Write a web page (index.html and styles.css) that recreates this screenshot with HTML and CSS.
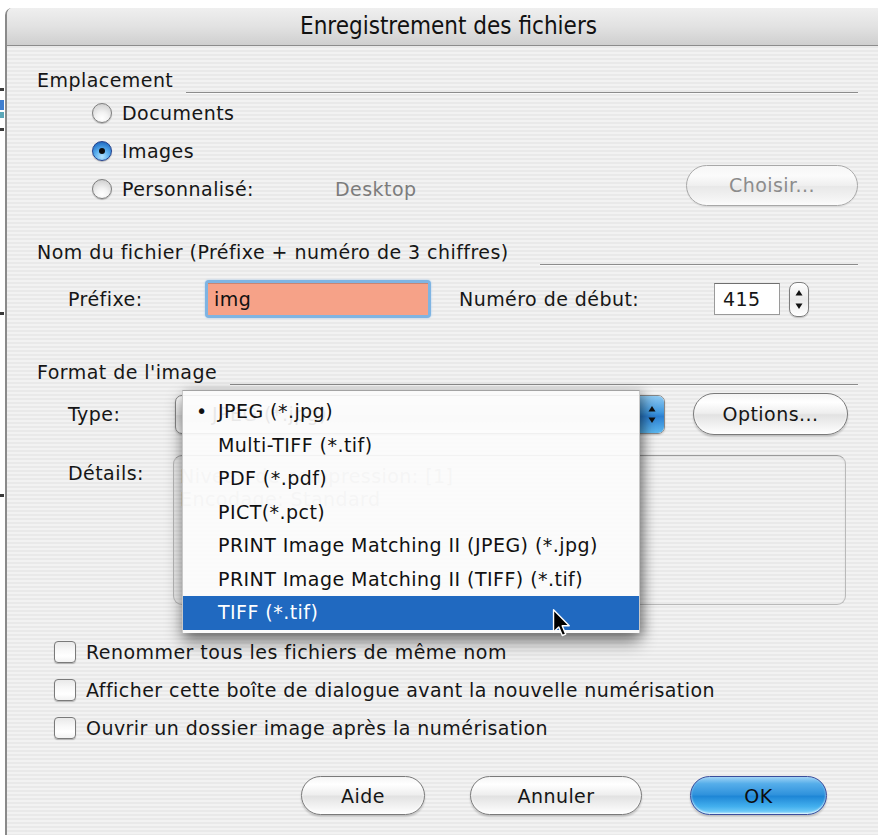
FILE: index.html
```html
<!DOCTYPE html>
<html lang="fr">
<head>
<meta charset="utf-8">
<title>Enregistrement des fichiers</title>
<link rel="stylesheet" href="styles.css">
</head>
<body>
<div class="desktop-edge">
  <span class="sliver dark" style="top:88px"></span>
  <span class="sliver blue" style="top:100px"></span>
  <span class="sliver teal" style="top:112px"></span>
  <span class="sliver dark" style="top:128px"></span>
  <span class="sliver dark" style="top:312px"></span>
  <span class="sliver dark" style="top:494px"></span>
</div>

<div class="window">
  <div class="titlebar">Enregistrement des fichiers</div>

  <div class="content">
    <!-- Emplacement -->
    <div class="group-head"><span>Emplacement</span><span class="rule"></span></div>
    <div class="radio-row first"><span class="radio"></span><span>Documents</span></div>
    <div class="radio-row"><span class="radio on"></span><span>Images</span></div>
    <div class="radio-row">
      <span class="radio"></span><span class="custom-label">Personnalisé:</span>
      <span class="path">Desktop</span>
      <button class="aqua btn-choose" disabled>Choisir...</button>
    </div>

    <!-- Nom du fichier -->
    <div class="group-head name-head"><span>Nom du fichier (Préfixe + numéro de 3 chiffres)</span><span class="rule wide-gap"></span></div>
    <div class="field-row">
      <span class="lbl-prefix">Préfixe:</span>
      <span class="prefix-ring"><span class="prefix-input">img</span></span>
      <span class="lbl-num">Numéro de début:</span>
      <span class="num-input">415</span>
      <span class="stepper">
        <svg width="20" height="35" viewBox="0 0 20 35">
          <path d="M10 8 L13.5 13.5 L6.5 13.5 Z" fill="#111"/>
          <path d="M10 27 L13.5 21.5 L6.5 21.5 Z" fill="#111"/>
        </svg>
      </span>
    </div>

    <!-- Format de l'image -->
    <div class="group-head format-head"><span>Format de l'image</span><span class="rule"></span></div>
    <div class="type-row">
      <span class="lbl-type">Type:</span>
      <span class="popup">
        <span class="popup-text">JPEG (*.jpg)</span>
        <span class="popup-arrows">
          <svg width="24" height="37" viewBox="0 0 24 37">
            <path d="M12 10 L15.5 15.5 L8.5 15.5 Z" fill="#111"/>
            <path d="M12 27 L15.5 21.5 L8.5 21.5 Z" fill="#111"/>
          </svg>
        </span>
      </span>
      <button class="aqua btn-options">Options...</button>
    </div>
    <div class="details-row">
      <span class="lbl-det">Détails:</span>
      <div class="details-box">
        <div>Niveau de compression: [1]</div>
        <div>Encodage: Standard</div>
      </div>
    </div>

    <!-- Options -->
    <div class="check-row first"><span class="check"></span><span>Renommer tous les fichiers de même nom</span></div>
    <div class="check-row"><span class="check"></span><span>Afficher cette boîte de dialogue avant la nouvelle numérisation</span></div>
    <div class="check-row"><span class="check"></span><span>Ouvrir un dossier image après la numérisation</span></div>

    <div class="button-row">
      <button class="aqua btn-help">Aide</button>
      <button class="aqua btn-cancel">Annuler</button>
      <button class="aqua default btn-ok">OK</button>
    </div>

    <!-- open popup menu -->
    <ul class="menu">
      <li class="checked">JPEG (*.jpg)</li>
      <li>Multi-TIFF (*.tif)</li>
      <li>PDF (*.pdf)</li>
      <li>PICT(*.pct)</li>
      <li>PRINT Image Matching II (JPEG) (*.jpg)</li>
      <li>PRINT Image Matching II (TIFF) (*.tif)</li>
      <li class="selected">TIFF (*.tif)</li>
    </ul>

    <svg class="cursor" width="20" height="31" viewBox="0 0 13 20">
      <path d="M1 1 L1 15.5 L4.4 12.3 L6.7 17.8 L8.9 16.9 L6.6 11.5 L11.2 11.5 Z" fill="#000" stroke="#fff" stroke-width="0.9" stroke-linejoin="round"/>
    </svg>
  </div>
</div>
</body>
</html>
```

FILE: styles.css
```css
* { box-sizing: border-box; }

html, body {
  margin: 0;
  padding: 0;
}

body {
  width: 878px;
  height: 835px;
  overflow: hidden;
  background: #ffffff;
  font-family: "DejaVu Sans", "Liberation Sans", sans-serif;
  font-size: 19px;
  letter-spacing: 0.45px;
  color: #161616;
  position: relative;
}

/* bits of the desktop peeking out on the left */
.desktop-edge {
  position: absolute;
  left: 0;
  top: 0;
  width: 5px;
  height: 835px;
}
.sliver {
  position: absolute;
  left: 0;
  width: 4px;
  height: 4px;
}
.sliver.dark { background: #3a3a3a; height: 3px; }
.sliver.blue { background: #3f7fd0; height: 10px; }
.sliver.teal { background: #5aa7b8; height: 6px; }

/* window frame */
.window {
  margin: 8px 0 0 5px;
  height: 827px;
  border-left: 2px solid #8a8a8a;
  border-top-left-radius: 7px;
  overflow: hidden;
  background: repeating-linear-gradient(180deg, #f2f2f2 0 2px, #e9e9e9 2px 4px);
}

.titlebar {
  height: 38px;
  padding-left: 12px;
  border-bottom: 1px solid #8c8c8c;
  background: linear-gradient(180deg, #efefef 0%, #e2e2e2 50%, #cfcfcf 100%);
  text-align: center;
  font-family: "DejaVu Sans Condensed", "DejaVu Sans", sans-serif;
  font-stretch: condensed;
  font-size: 24px;
  letter-spacing: 0;
  line-height: 36px;
  color: #111;
}

.content {
  position: relative;
  padding: 22px 20px 0 30px;
}

/* group headers with the rule running to the right */
.group-head {
  display: flex;
  height: 24px;
  line-height: 24px;
  white-space: nowrap;
}
.group-head.name-head { margin-top: 32px; }
.group-head.format-head { margin-top: 41px; }

.rule {
  flex: 1;
  align-self: center;
  height: 17px;
  margin-left: 13px;
  border-bottom: 1px solid #8c8c8c;
  box-shadow: 0 1px 0 #fafafa;
  transform: translateY(4px);
}
.rule.wide-gap { margin-left: 31px; }

/* radio buttons */
.radio-row {
  display: flex;
  align-items: center;
  height: 38px;
  margin-left: 55px;
  white-space: nowrap;
}
.radio-row.first { margin-top: 2px; }

.radio {
  width: 20px;
  height: 20px;
  margin-right: 10px;
  border-radius: 50%;
  border: 1px solid #7e7e7e;
  background: radial-gradient(circle at 50% 80%, #ffffff 0%, #f3f3f3 35%, #d4d4d4 80%, #bdbdbd 100%);
  box-shadow: 0 1px 1px rgba(0, 0, 0, 0.25);
  display: flex;
  align-items: center;
  justify-content: center;
  flex: none;
}
.radio.on {
  border-color: #22408c;
  background: radial-gradient(circle at 50% 82%, #b4e4ff 0%, #5cb0ee 40%, #2c7ccf 75%, #1a52a2 100%);
}
.radio.on::after {
  content: "";
  width: 6px;
  height: 6px;
  border-radius: 50%;
  background: #0c0c0c;
}

.custom-label { min-width: 213px; }
.path { color: #7c7c7c; }

/* aqua push buttons */
.aqua {
  display: flex;
  align-items: center;
  justify-content: center;
  padding: 0;
  font: inherit;
  letter-spacing: inherit;
  color: #151515;
  border: 1px solid #7a7a7a;
  border-radius: 21px;
  background: linear-gradient(180deg, #f4f4f4 0%, #ffffff 20%, #eeeeee 48%, #e2e2e2 52%, #f3f3f3 80%, #ffffff 100%);
  box-shadow: 0 2px 2px rgba(0, 0, 0, 0.18), inset 0 -1px 2px rgba(255, 255, 255, 0.9);
  flex: none;
}
.aqua:disabled {
  color: #8c8c8c;
  border-color: #a8a8a8;
  box-shadow: 0 1px 1px rgba(0, 0, 0, 0.08);
  background: linear-gradient(180deg, #f6f6f6 0%, #fbfbfb 25%, #efefef 50%, #e8e8e8 52%, #f4f4f4 85%, #fcfcfc 100%);
}
.aqua.default {
  border-color: #3a4d9c;
  color: #0d0d0d;
  background: linear-gradient(180deg, #9fd3f5 0%, #56aeea 18%, #2f92dc 48%, #1e86d6 52%, #43b0ee 80%, #7fd3fb 100%);
}

.btn-choose {
  width: 172px;
  height: 41px;
  margin-left: auto;
  margin-top: -8px;
}

/* file name row */
.field-row {
  display: flex;
  align-items: center;
  height: 40px;
  margin-top: 15px;
  padding-left: 31px;
  white-space: nowrap;
}
.lbl-prefix { width: 137px; }
.prefix-ring {
  width: 226px;
  height: 38px;
  padding: 3px;
  border-radius: 4px;
  background: #7fb4e2;
  box-shadow: 0 0 2px #9cc7ee;
  flex: none;
}
.prefix-input {
  display: block;
  height: 100%;
  padding-left: 6px;
  line-height: 30px;
  background: #f6a288;
  border-top: 1px solid #c98572;
  color: #111;
}
.lbl-num {
  width: 255px;
  margin-left: 28px;
}
.num-input {
  width: 66px;
  height: 32px;
  padding-left: 8px;
  line-height: 30px;
  background: #ffffff;
  border: 1px solid #9a9a9a;
  border-top-color: #6f6f6f;
  flex: none;
}
.stepper {
  width: 20px;
  height: 35px;
  margin-left: 9px;
  border: 1px solid #7d7d7d;
  border-radius: 8px;
  background: linear-gradient(180deg, #ffffff 0%, #e9e9e9 50%, #ffffff 100%);
  box-shadow: 0 1px 1px rgba(0, 0, 0, 0.2);
  display: flex;
  align-items: center;
  justify-content: center;
  overflow: hidden;
  flex: none;
}
.stepper svg { display: block; flex: none; }

/* image format */
.type-row {
  display: flex;
  align-items: center;
  height: 44px;
  margin-top: 8px;
  padding-left: 31px;
  white-space: nowrap;
}
.lbl-type { width: 107px; }
.popup {
  width: 490px;
  height: 39px;
  display: flex;
  align-items: center;
  border: 1px solid #868686;
  border-radius: 7px;
  background: linear-gradient(180deg, #ffffff 0%, #eeeeee 50%, #e3e3e3 52%, #fbfbfb 100%);
  box-shadow: 0 1px 2px rgba(0, 0, 0, 0.2);
  overflow: hidden;
  flex: none;
}
.popup-text {
  flex: 1;
  padding-left: 36px;
  color: #333;
}
.popup-arrows {
  width: 25px;
  height: 100%;
  background: linear-gradient(180deg, #8ec9f1 0%, #3f97de 45%, #2b7fd1 55%, #5cb7ef 100%);
  border-left: 1px solid #31539f;
  display: flex;
  align-items: center;
  justify-content: center;
}
.popup-arrows svg { display: block; }
.btn-options {
  width: 155px;
  height: 42px;
  margin-left: 28px;
}

.details-row {
  display: flex;
  margin-top: 19px;
  padding-left: 31px;
  white-space: nowrap;
}
.lbl-det {
  width: 105px;
  padding-top: 6px;
  line-height: 24px;
}
.details-box {
  width: 673px;
  height: 150px;
  padding: 9px 6px;
  border: 1px solid #b9b9b9;
  border-top-color: #9a9a9a;
  border-radius: 9px;
  line-height: 23px;
  color: #b4b4b4;
  box-shadow: inset 0 1px 2px rgba(0, 0, 0, 0.08);
}

/* check boxes */
.check-row {
  display: flex;
  align-items: center;
  height: 38px;
  margin-left: 17px;
  white-space: nowrap;
}
.check-row.first { margin-top: 28px; }
.check {
  width: 22px;
  height: 22px;
  margin-right: 10px;
  border: 1px solid #7a7a7a;
  border-radius: 4px;
  background: linear-gradient(180deg, #e9e9e9 0%, #f8f8f8 40%, #ffffff 70%, #f2f2f2 100%);
  box-shadow: 0 1px 1px rgba(0, 0, 0, 0.25);
  flex: none;
}

/* dialog buttons */
.button-row {
  display: flex;
  justify-content: flex-end;
  margin-top: 29px;
  padding-right: 31px;
}
.btn-help { width: 124px; height: 39px; }
.btn-cancel { width: 172px; height: 39px; margin-left: 45px; }
.btn-ok { width: 137px; height: 39px; margin-left: 48px; }

/* popup menu, drawn over the form */
.menu {
  position: absolute;
  left: 175px;
  top: 344px;
  width: 458px;
  height: 243px;
  margin: 0;
  padding: 4px 0 0 0;
  list-style: none;
  background: rgba(252, 252, 252, 0.9);
  border-top: 1px solid #a3a3a3;
  border-left: 1px solid #c8c8c8;
  border-right: 1px solid #c8c8c8;
  box-shadow: 0 9px 16px rgba(0, 0, 0, 0.45), 4px 2px 10px rgba(0, 0, 0, 0.25);
  white-space: nowrap;
}
.menu li {
  height: 33.5px;
  line-height: 33.5px;
  padding-left: 35px;
  color: #111;
  position: relative;
}
.menu li.checked::before {
  content: "\2022";
  position: absolute;
  left: 13px;
}
.menu li.selected {
  background: #2069c0;
  color: #ffffff;
}

.cursor {
  position: absolute;
  left: 545px;
  top: 562px;
}
```
